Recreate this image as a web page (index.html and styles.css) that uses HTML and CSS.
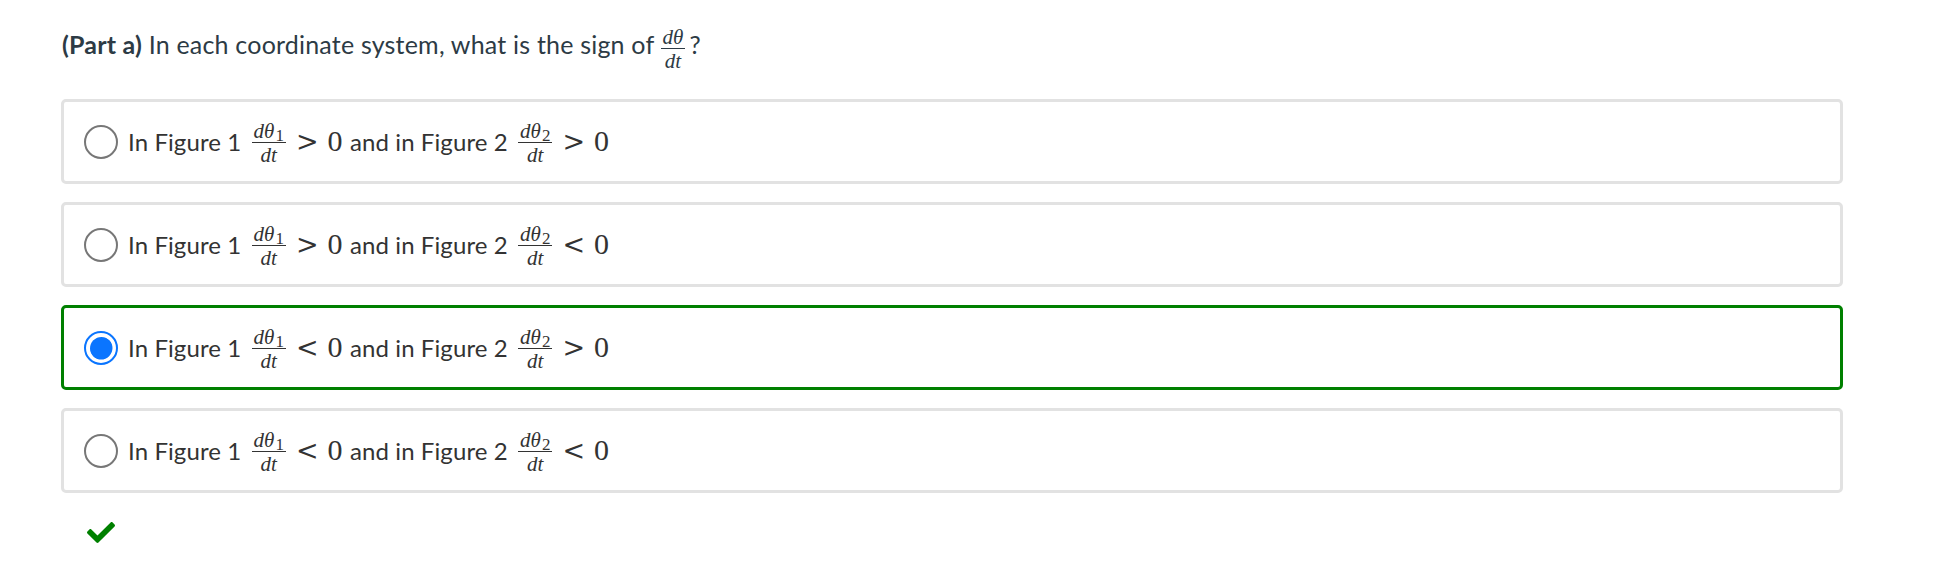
FILE: index.html
```html
<!DOCTYPE html>
<html lang="en">
<head>
<meta charset="utf-8">
<title>Part a</title>
<link rel="stylesheet" href="styles.css">
</head>
<body>
<div class="question">
  <p class="prompt"><strong>(Part a)</strong> In each coordinate system, what is the sign of <span class="frac frac-title"><span class="num"><i>dθ</i></span><span class="den"><i>dt</i></span></span>?</p>

  <div class="options">
    <div class="option">
      <span class="radio"></span>
      <span class="label">In Figure 1 <span class="frac"><span class="num"><i>dθ</i><sub>1</sub></span><span class="den"><i>dt</i></span></span><span class="rel">&gt;</span><span class="zero">0</span> and in Figure 2 <span class="frac"><span class="num"><i>dθ</i><sub>2</sub></span><span class="den"><i>dt</i></span></span><span class="rel">&gt;</span><span class="zero">0</span></span>
    </div>
    <div class="option">
      <span class="radio"></span>
      <span class="label">In Figure 1 <span class="frac"><span class="num"><i>dθ</i><sub>1</sub></span><span class="den"><i>dt</i></span></span><span class="rel">&gt;</span><span class="zero">0</span> and in Figure 2 <span class="frac"><span class="num"><i>dθ</i><sub>2</sub></span><span class="den"><i>dt</i></span></span><span class="rel">&lt;</span><span class="zero">0</span></span>
    </div>
    <div class="option option-correct">
      <span class="radio radio-checked"></span>
      <span class="label">In Figure 1 <span class="frac"><span class="num"><i>dθ</i><sub>1</sub></span><span class="den"><i>dt</i></span></span><span class="rel">&lt;</span><span class="zero">0</span> and in Figure 2 <span class="frac"><span class="num"><i>dθ</i><sub>2</sub></span><span class="den"><i>dt</i></span></span><span class="rel">&gt;</span><span class="zero">0</span></span>
    </div>
    <div class="option">
      <span class="radio"></span>
      <span class="label">In Figure 1 <span class="frac"><span class="num"><i>dθ</i><sub>1</sub></span><span class="den"><i>dt</i></span></span><span class="rel">&lt;</span><span class="zero">0</span> and in Figure 2 <span class="frac"><span class="num"><i>dθ</i><sub>2</sub></span><span class="den"><i>dt</i></span></span><span class="rel">&lt;</span><span class="zero">0</span></span>
    </div>
  </div>

  <div class="feedback">
    <svg class="check" viewBox="0 64 512 384" width="28" height="21" aria-label="correct">
      <path d="M173.898 439.404l-166.4-166.4c-9.997-9.997-9.997-26.206 0-36.204l36.203-36.204c9.997-9.998 26.207-9.998 36.204 0L192 312.69 432.095 72.596c9.997-9.997 26.207-9.997 36.204 0l36.203 36.204c9.997 9.997 9.997 26.206 0 36.204l-294.4 294.401c-9.998 9.997-26.207 9.997-36.204-.001z" fill="#008000"/>
    </svg>
  </div>
</div>
</body>
</html>
```

FILE: styles.css
```css
html, body {
  margin: 0;
  padding: 0;
  background: #ffffff;
}

body {
  font-family: "Lato", "Open Sans", "Liberation Sans", sans-serif;
  font-size: 24px;
  color: #333333;
}

.question {
  padding: 22px 91px 0 61px;
}

.prompt {
  margin: 0 0 32px 1px;
  color: #2d3b45;
  font-size: 25px;
  letter-spacing: 0.2px;
  line-height: 45px;
  height: 45px;
}

.prompt strong {
  font-weight: 700;
}

.options {
  display: flex;
  flex-direction: column;
  gap: 18px;
}

.option {
  box-sizing: border-box;
  height: 85px;
  border: 3px solid #e2e2e2;
  border-radius: 5px;
  display: flex;
  align-items: center;
  padding-left: 20px;
}

.option-correct {
  border-color: #008000;
}

.radio {
  box-sizing: border-box;
  flex: none;
  width: 34px;
  height: 34px;
  border-radius: 50%;
  border: 2px solid #777777;
  background: #ffffff;
  margin-right: 10px;
}

.radio-checked {
  border: 2.5px solid #0a75ff;
  padding: 3.5px;
  background: #0a75ff content-box;
  box-shadow: inset 0 0 0 3.5px #ffffff;
}

.label {
  white-space: nowrap;
  line-height: 50px;
  letter-spacing: 0.1px;
}

.frac {
  display: inline-flex;
  flex-direction: column;
  align-items: stretch;
  vertical-align: 13px;
  margin: 0 4px 0 4px;
  font-family: "Liberation Serif", "Times New Roman", serif;
  font-size: 21px;
  line-height: 20px;
  letter-spacing: 0;
  text-align: center;
}

.frac i {
  font-style: italic;
}

.frac .num {
  display: block;
  padding: 0 2px 1px;
  border-bottom: 1.3px solid currentColor;
}

.frac .den {
  display: block;
  padding: 2px 2px 0;
}

.frac sub {
  font-size: 17px;
  font-style: normal;
  vertical-align: -3px;
  line-height: 0;
  margin-left: 1px;
}

.frac-title {
  vertical-align: 10px;
  margin: 0 4px 0 0;
}

.rel {
  font-family: "DejaVu Serif", "Liberation Serif", serif;
  font-size: 27px;
  margin: 0 9px 0 6px;
}

.zero {
  font-family: "Liberation Serif", "Times New Roman", serif;
  font-size: 30px;
  margin-right: 1px;
}

.feedback {
  padding: 29px 0 0 26px;
  height: 30px;
}

.check {
  display: block;
}
```
